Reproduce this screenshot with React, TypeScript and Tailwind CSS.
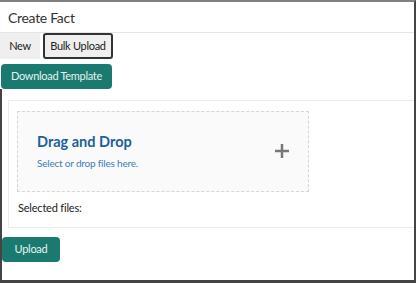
function PlusIcon() {
    return (
        <svg width="16" height="16" viewBox="0 0 16 16" className="text-[#777]">
            <path d="M8 1v14M1 8h14" stroke="currentColor" strokeWidth="2.5" />
        </svg>
    )
}

export default function App() {
    return (
        <main
            className="flex h-[283px] w-[416px] flex-col overflow-hidden border-t-2 border-r-2 border-b-[3px] border-t-[#808080] border-r-[#444] border-b-[#444] bg-white whitespace-nowrap text-[#333]"
            style={{ fontFamily: 'Lato, "Noto Sans", sans-serif' }}
        >
            <header className="flex h-[31px] shrink-0 items-center border-b border-[#e6e6e6] pl-2 text-[14px] tracking-[-0.3px]">
                Create Fact
            </header>

            <div className="flex shrink-0 gap-[3px]">
                <button className="h-[26px] w-[40px] bg-[#efefef] text-[11px] tracking-[-0.3px] text-[#222]">New</button>
                <button className="h-[26px] w-[70px] rounded-[3px] border-2 border-[#333] bg-[#efefef] text-[11px] tracking-[-0.3px] text-[#222]">
                    Bulk Upload
                </button>
            </div>

            <div className="mt-[3px] shrink-0 pl-[1px]">
                <button className="h-[25px] w-[111px] rounded-[4px] bg-[#1a7a70] text-[11px] tracking-[-0.3px] text-[#e3f3f0]">
                    Download Template
                </button>
            </div>

            <section className="flex flex-1 flex-col border-l-2 border-[#444]">
                <div className="mt-[11px] ml-[6px] h-[128px] border border-r-0 border-[#ececec] px-2 pt-[10px]">
                    <div className="flex h-[81px] w-[292px] items-center justify-between border border-dashed border-[#d6d6d6] bg-[#fafafa] pr-[18px] pl-[19px]">
                        <div>
                            <p className="text-[14.5px] leading-[20px] font-bold text-[#1d5e9c]">Drag and Drop</p>
                            <p className="mt-[4px] text-[10px] tracking-[-0.2px] text-[#3b7cc0]">Select or drop files here.</p>
                        </div>
                        <PlusIcon />
                    </div>
                    <p className="mt-[8px] ml-[1px] text-[11px] tracking-[-0.2px] text-[#222]">Selected files:</p>
                </div>

                <div className="mt-[7px]">
                    <button className="h-[25px] w-[58px] rounded-[4px] bg-[#1a7a70] text-[11px] tracking-[-0.3px] text-[#e3f3f0]">Upload</button>
                </div>
            </section>
        </main>
    )
}
